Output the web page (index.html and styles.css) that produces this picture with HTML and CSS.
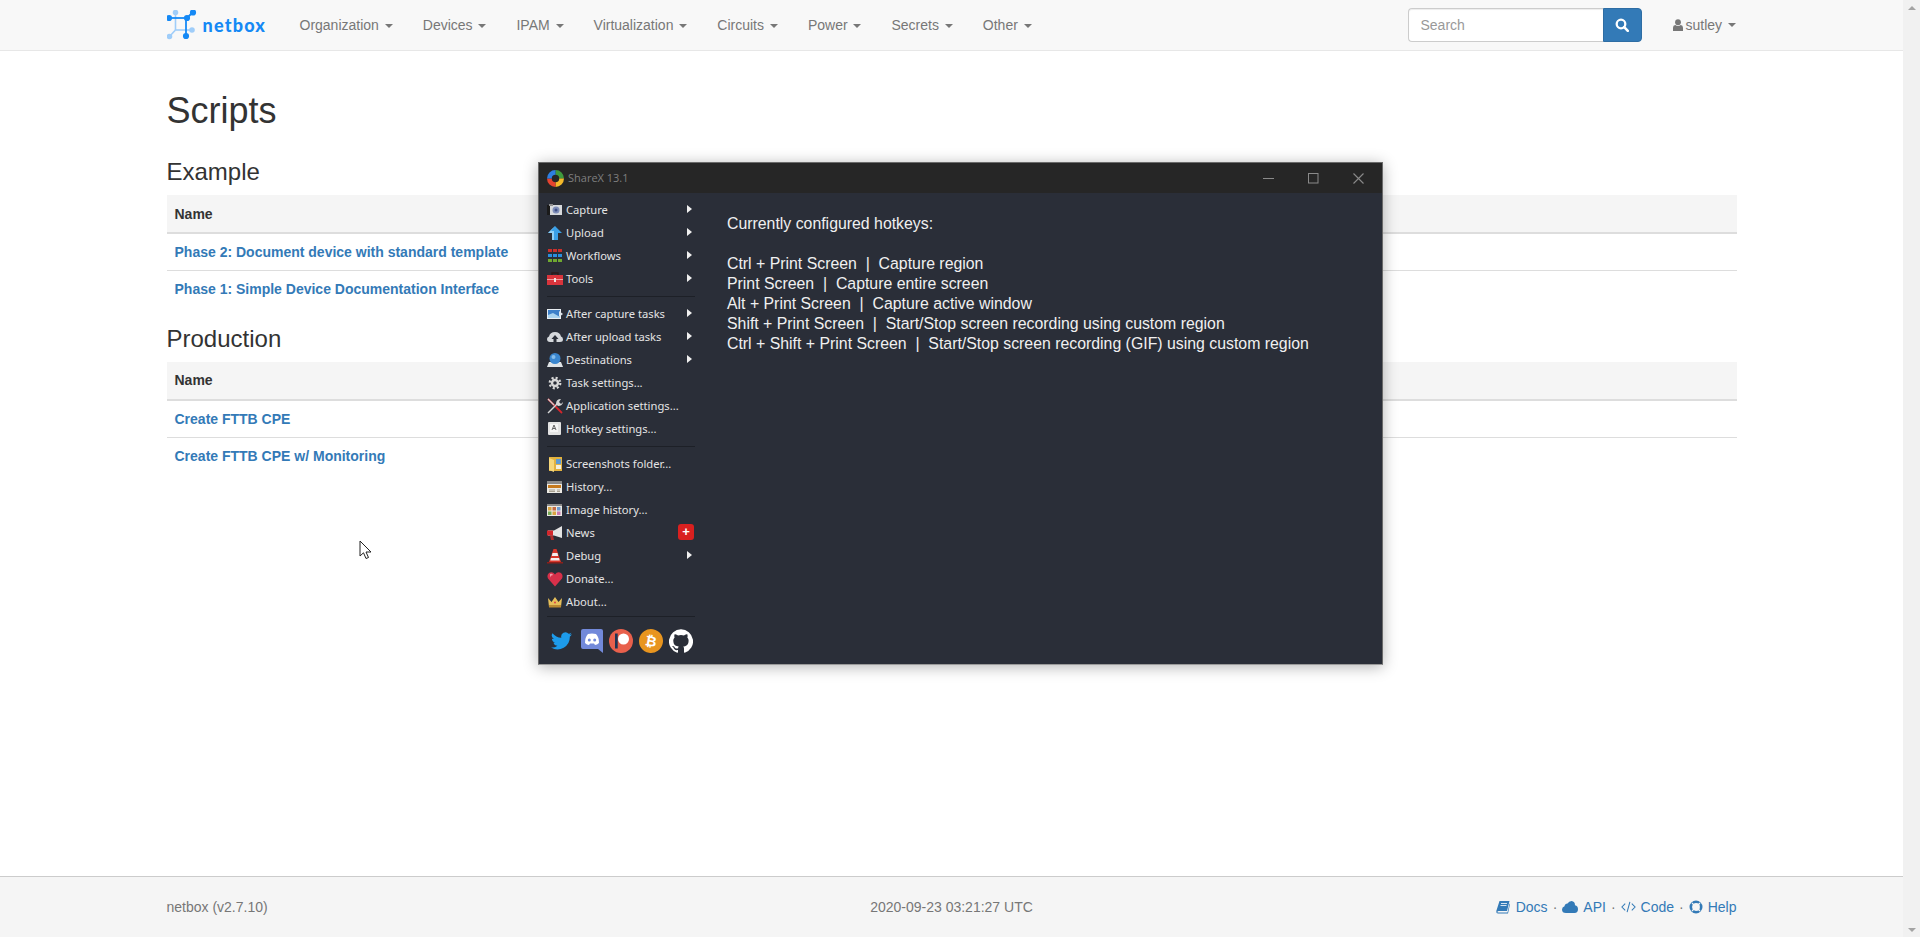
FILE: index.html
```html
<!DOCTYPE html>
<html lang="en">
<head>
<meta charset="utf-8">
<title>Scripts - NetBox</title>
<link rel="stylesheet" href="styles.css">
</head>
<body>
<div class="page">
  <nav class="navbar">
    <div class="nav-inner">
      <a class="brand">
        <svg class="brand-icon" viewBox="0 0 30 30" width="30" height="30">
          <g stroke="#9fcdf9" stroke-width="1.6" fill="#9fcdf9">
            <line x1="8.500" y1="2" x2="8.500" y2="20"/><line x1="8.500" y1="20" x2="25" y2="20"/><line x1="8.500" y1="20" x2="2" y2="27"/>
            <circle cx="8.500" cy="2.500" r="2"/><circle cx="25" cy="20" r="2"/><circle cx="2.500" cy="26.500" r="2"/>
          </g>
          <g stroke="#1589f5" stroke-width="1.8" fill="#1589f5">
            <line x1="1" y1="8" x2="20" y2="8"/><line x1="20" y1="8" x2="26" y2="2"/><line x1="19" y1="8" x2="19" y2="26"/>
            <circle cx="2" cy="8" r="2.200"/><circle cx="20" cy="8" r="2.200"/><circle cx="26" cy="2.500" r="2.200"/><circle cx="19" cy="26" r="2.200"/>
          </g>
        </svg>
        <span class="brand-text">netbox</span>
      </a>
      <ul class="menu">
        <li><a>Organization <span class="caret"></span></a></li>
        <li><a>Devices <span class="caret"></span></a></li>
        <li><a>IPAM <span class="caret"></span></a></li>
        <li><a>Virtualization <span class="caret"></span></a></li>
        <li><a>Circuits <span class="caret"></span></a></li>
        <li><a>Power <span class="caret"></span></a></li>
        <li><a>Secrets <span class="caret"></span></a></li>
        <li><a>Other <span class="caret"></span></a></li>
      </ul>
      <form class="search">
        <input class="search-input" type="text" placeholder="Search">
        <button class="search-btn" type="button" aria-label="Search">
          <svg viewBox="0 0 14 14" width="14" height="14"><circle cx="6" cy="6" r="4.300" fill="none" stroke="#fff" stroke-width="2.300"/><line x1="9.200" y1="9.200" x2="12.800" y2="12.800" stroke="#fff" stroke-width="2.600" stroke-linecap="round"/></svg>
        </button>
      </form>
      <a class="user">
        <svg viewBox="0 0 11 13" width="10" height="12"><circle cx="5.500" cy="3.500" r="3.200" fill="#777"/><path d="M0 13V9.500Q0 7 2.500 6.600Q5.500 8.500 8.500 6.600Q11 7 11 9.500V13Z" fill="#777"/></svg>
        sutley <span class="caret"></span>
      </a>
    </div>
  </nav>

  <main class="content">
    <h1 class="title">Scripts</h1>
    <h3 class="group">Example</h3>
    <table class="scripts">
      <thead><tr><th>Name</th></tr></thead>
      <tbody>
        <tr><td><a>Phase 2: Document device with standard template</a></td></tr>
        <tr><td><a>Phase 1: Simple Device Documentation Interface</a></td></tr>
      </tbody>
    </table>
    <h3 class="group">Production</h3>
    <table class="scripts">
      <thead><tr><th>Name</th></tr></thead>
      <tbody>
        <tr><td><a>Create FTTB CPE</a></td></tr>
        <tr><td><a>Create FTTB CPE w/ Monitoring</a></td></tr>
      </tbody>
    </table>
  </main>

  <footer class="footer">
    <div class="foot-inner">
      <span class="foot-cell">netbox (v2.7.10)</span>
      <span class="foot-cell foot-mid">2020-09-23 03:21:27 UTC</span>
      <span class="foot-cell foot-right">
        <svg class="fi fi-book" viewBox="0 0 14 14" width="14" height="14"><path d="M3.500 1H13.500L11 11H2.500Q1 11 1.500 12.500H11.500L13.500 3.500L14 4L12 13.500H2Q0 13.500 .3 11Z" fill="#337ab7"/><path d="M5 3.500H11M4.500 5.500H10.500" stroke="#fff" stroke-width=".8"/></svg>
        <a>Docs</a><span class="dot">·</span>
        <svg class="fi" viewBox="0 0 16 12" width="16" height="12"><path d="M4 12Q0 12 0 8.500Q0 6 2.500 5.300Q3 2.500 5.500 2.500Q7 0 9.500 0Q13 .5 13 4.300Q16 5 16 8.300Q16 12 12.500 12Z" fill="#337ab7"/></svg>
        <a>API</a><span class="dot">·</span>
        <svg class="fi" viewBox="0 0 16 12" width="15" height="12"><path d="M4.500 2.500L1 6L4.500 9.500M11.500 2.500L15 6L11.500 9.500M9.500 .5L6.500 11.500" fill="none" stroke="#337ab7" stroke-width="1.100"/></svg>
        <a>Code</a><span class="dot">·</span>
        <svg class="fi" viewBox="0 0 14 14" width="14" height="14"><circle cx="7" cy="7" r="5.200" fill="none" stroke="#337ab7" stroke-width="2.600"/><path d="M3 3L5 5M11 3L9 5M3 11L5 9M11 11L9 9" stroke="#f5f5f5" stroke-width="1.200"/></svg>
        <a>Help</a>
      </span>
    </div>
  </footer>

  <section class="win">
    <header class="win-title">
      <svg class="win-logo" viewBox="0 0 16 16" width="17" height="17">
        <path d="M8 0A8 8 0 0 1 16 8H11.500A3.500 3.500 0 0 0 8 4.500Z" fill="#3f9a3d"/>
        <path d="M16 8A8 8 0 0 1 8 16V11.500A3.500 3.500 0 0 0 11.500 8Z" fill="#f4b92a"/>
        <path d="M8 16A8 8 0 0 1 0 8H4.500A3.500 3.500 0 0 0 8 11.500Z" fill="#e5432f"/>
        <path d="M0 8A8 8 0 0 1 8 0V4.500A3.500 3.500 0 0 0 4.500 8Z" fill="#2e7fe0"/>
        <circle cx="8" cy="8" r="2.500" fill="#262626"/>
      </svg>
      <span class="win-name">ShareX 13.1</span>
      <span class="win-ctrls">
        <svg viewBox="0 0 11 11" width="11" height="11"><line x1="0" y1="5.500" x2="11" y2="5.500" stroke="#8a8a8a"/></svg>
        <svg viewBox="0 0 11 11" width="11" height="11"><rect x=".5" y=".5" width="9.500" height="9.500" fill="none" stroke="#8a8a8a"/></svg>
        <svg viewBox="0 0 11 11" width="11" height="11"><path d="M.5 .5L10.500 10.500M10.500 .5L.5 10.500" stroke="#8a8a8a" stroke-width="1.100"/></svg>
      </span>
    </header>
    <div class="win-body">
      <aside class="win-menu">
        <ul class="m-list">
          <li class="m-item"><svg class="m-ic" viewBox="0 0 16 16"><rect x="0" y="3" width="15" height="10" fill="#d7d9dc"/><rect x="0" y="3" width="3" height="10" fill="#1a1a1a"/><rect x="2" y="2" width="4" height="2" fill="#8c8c8c"/><circle cx="9" cy="8" r="3.500" fill="#7e8db8"/><circle cx="9" cy="8" r="1.500" fill="#3e4f86"/></svg><span class="m-text">Capture</span><i class="m-arrow"></i></li>
          <li class="m-item"><svg class="m-ic" viewBox="0 0 16 16"><path d="M8 1L15 8H11V15H5V8H1Z" fill="#3aa0e8"/><path d="M8 1L1 8H5V15H7V6H4Z" fill="#8fd0f7"/></svg><span class="m-text">Upload</span><i class="m-arrow"></i></li>
          <li class="m-item"><svg class="m-ic" viewBox="0 0 16 16"><path d="M1 1h4v3H1zM6 1h4v3H6zM11 1h4v3h-4z" fill="#c9302c"/><path d="M1 6h4v3H1zM6 6h4v3H6zM11 6h4v3h-4z" fill="#2a8fe0"/><path d="M1 11h4v3H1zM6 11h4v3H6zM11 11h4v3h-4z" fill="#6fa830"/></svg><span class="m-text">Workflows</span><i class="m-arrow"></i></li>
          <li class="m-item"><svg class="m-ic" viewBox="0 0 16 16"><path d="M5 4V2H11V4" fill="none" stroke="#2a1a1a" stroke-width="1.400"/><rect x="0" y="4" width="16" height="10" fill="#d8343c"/><rect x="0" y="8" width="16" height="1" fill="#f0a0a0"/><rect x="7" y="7" width="2" height="4" fill="#f0e0e0"/></svg><span class="m-text">Tools</span><i class="m-arrow"></i></li>
          <li class="m-sep"></li>
          <li class="m-item"><svg class="m-ic" viewBox="0 0 16 16"><rect x="0" y="3" width="14" height="10" fill="#e8edf2"/><rect x="1" y="4" width="12" height="8" fill="#3d7fc9"/><path d="M1 9L6 7L13 11V12H1Z" fill="#a9d2ef"/><path d="M12 5L16 8L12 11Z" fill="#dfe6ec"/></svg><span class="m-text">After capture tasks</span><i class="m-arrow"></i></li>
          <li class="m-item"><svg class="m-ic" viewBox="0 0 16 16"><path d="M3 13Q0 13 0 10Q0 8 2 7.500Q3 3 8 3Q13 3 14 7.500Q16 8 16 10.500Q16 13 13 13Z" fill="#d5d8dc"/><path d="M8 6L11.500 10H9.500V13H6.500V10H4.500Z" fill="#2a2e38"/></svg><span class="m-text">After upload tasks</span><i class="m-arrow"></i></li>
          <li class="m-item"><svg class="m-ic" viewBox="0 0 16 16"><path d="M2 10H14L16 15H0Z" fill="#dfe3e6"/><circle cx="8" cy="6.500" r="5.500" fill="#3a86cf"/><circle cx="6.500" cy="5" r="2" fill="#86bdea"/></svg><span class="m-text">Destinations</span><i class="m-arrow"></i></li>
          <li class="m-item"><svg class="m-ic" viewBox="0 0 16 16"><circle cx="8" cy="8" r="3" fill="none" stroke="#d8d8d8" stroke-width="2.400"/><circle cx="8" cy="8" r="5.300" fill="none" stroke="#d8d8d8" stroke-width="2.200" stroke-dasharray="2.100 2.060"/></svg><span class="m-text">Task settings...</span></li>
          <li class="m-item"><svg class="m-ic" viewBox="0 0 16 16"><path d="M1 1L15 15" stroke="#d4262c" stroke-width="1.800"/><path d="M1 1L7 7" stroke="#cfcfcf" stroke-width="1.200"/><path d="M1 15L10 6" stroke="#d5d5d5" stroke-width="1.500"/><path d="M9 6Q9 1 14 1L12 4L14 6L16 4Q15.500 8 11 8Z" fill="#d5d5d5"/></svg><span class="m-text">Application settings...</span></li>
          <li class="m-item"><svg class="m-ic" viewBox="0 0 16 16"><rect x="1" y="1" width="13" height="13" rx="1" fill="#e3e3e3"/><rect x="3" y="3" width="8" height="8" fill="#f5f5f5"/><path d="M5 9L7 4L9 9M6 7.500H8" fill="none" stroke="#555" stroke-width=".9"/></svg><span class="m-text">Hotkey settings...</span></li>
          <li class="m-sep"></li>
          <li class="m-item"><svg class="m-ic" viewBox="0 0 16 16"><rect x="2" y="1" width="13" height="14" fill="#e2b23f"/><path d="M2 2L7 4V16L2 14Z" fill="#f6d77a"/><rect x="9" y="3" width="5" height="5" fill="#5e9bd3"/><rect x="9" y="9" width="5" height="4" fill="#f4f0e0"/></svg><span class="m-text">Screenshots folder...</span></li>
          <li class="m-item"><svg class="m-ic" viewBox="0 0 16 16"><rect x="0" y="2" width="15" height="12" fill="#eceae4"/><rect x="0" y="2" width="15" height="3" fill="#8a8a8a"/><rect x="1" y="6" width="13" height="3" fill="#c67a1e"/><path d="M2 11H8M2 12.500H8M10 11H13M10 12.500H13" stroke="#a8a090"/></svg><span class="m-text">History...</span></li>
          <li class="m-item"><svg class="m-ic" viewBox="0 0 16 16"><rect x="0" y="2" width="15" height="12" fill="#eceae4"/><rect x="0" y="2" width="15" height="2" fill="#8a8a8a"/><rect x="1" y="5" width="3.500" height="3.500" fill="#d9a441"/><rect x="5.500" y="5" width="3.500" height="3.500" fill="#c56b43"/><rect x="10" y="5" width="3.500" height="3.500" fill="#6f9bcf"/><rect x="1" y="9.500" width="3.500" height="3.500" fill="#76a854"/><rect x="5.500" y="9.500" width="3.500" height="3.500" fill="#d9a441"/><rect x="10" y="9.500" width="3.500" height="3.500" fill="#c879b0"/></svg><span class="m-text">Image history...</span></li>
          <li class="m-item"><svg class="m-ic" viewBox="0 0 16 16"><path d="M15 1V13L7 10.500H1V5.500H7Z" fill="#e4e4e4"/><path d="M0 5.500H6V10.500H0Z" fill="#d4262c"/><path d="M3 10.500H6L7 15H4Z" fill="#b02a2a"/></svg><span class="m-text">News</span><span class="m-badge">+</span></li>
          <li class="m-item"><svg class="m-ic" viewBox="0 0 16 16"><path d="M6.500 1H9.500L14 14H2Z" fill="#d9362b"/><path d="M5.500 5H10.500L11.200 8H4.800ZM4 10H12L12.700 12.500H3.300Z" fill="#f3eded"/><rect x="0" y="14" width="16" height="1.500" fill="#8c1f1a"/></svg><span class="m-text">Debug</span><i class="m-arrow"></i></li>
          <li class="m-item"><svg class="m-ic" viewBox="0 0 16 16"><path d="M8 15.500L1 7.500Q-.5 4 2 2Q5.500 0 8 3.500Q10.500 0 14 2Q16.500 4 15 7.500Z" fill="#d8304a"/><path d="M3 3Q5 2 6 4Q3.500 4 3 6.500Z" fill="#f29aa6"/></svg><span class="m-text">Donate...</span></li>
          <li class="m-item"><svg class="m-ic" viewBox="0 0 16 16"><path d="M1 4L4.500 8L8 3L11.500 8L15 4L14 13H2Z" fill="#e5bf5b"/><rect x="2" y="11" width="12" height="2.500" fill="#b98a32"/><circle cx="8" cy="8.500" r="1" fill="#d44"/></svg><span class="m-text">About...</span></li>
          <li class="m-sep m-sep-last"></li>
        </ul>
        <div class="socials">
          <svg class="s-twitter" viewBox="0 0 24 20" width="21" height="18"><path d="M24 2.400a9.800 9.800 0 0 1-2.800.8A4.900 4.900 0 0 0 23.300.5a9.800 9.800 0 0 1-3.100 1.200 4.900 4.900 0 0 0-8.400 4.500A14 14 0 0 1 1.700 1a4.900 4.900 0 0 0 1.500 6.600 4.900 4.900 0 0 1-2.200-.6c0 2.400 1.700 4.400 4 4.900a4.900 4.900 0 0 1-2.200.1 4.900 4.900 0 0 0 4.600 3.400A9.900 9.900 0 0 1 0 17.400 14 14 0 0 0 21.500 5a9.900 9.900 0 0 0 2.500-2.600z" fill="#1d9bea"/></svg>
          <svg class="s-discord" viewBox="0 0 22 24" width="22" height="24"><path d="M2 0H20Q22 0 22 2V24L17 20H2Q0 20 0 18V2Q0 0 2 0Z" fill="#7289da"/><path d="M4 14Q4 8 7 5Q11 4 15 5Q18 8 18 14Q16 16 14 16L13 14.500H9L8 16Q6 16 4 14Z" fill="#fff"/><circle cx="8.300" cy="11" r="1.500" fill="#7289da"/><circle cx="13.700" cy="11" r="1.500" fill="#7289da"/></svg>
          <svg class="s-patreon" viewBox="0 0 24 24" width="24" height="24"><circle cx="12" cy="12" r="12" fill="#e8604c"/><circle cx="14.500" cy="10" r="5.500" fill="#fff"/><rect x="6" y="4.500" width="2.700" height="15" fill="#1f3555"/></svg>
          <span class="s-btc">₿</span>
          <svg class="s-github" viewBox="0 0 24 24" width="24" height="24"><path d="M12 .3a12 12 0 0 0-3.800 23.400c.6.1.8-.3.8-.6v-2c-3.300.7-4-1.600-4-1.600-.6-1.400-1.400-1.800-1.400-1.800-1-.7.1-.7.1-.7 1.200 0 1.900 1.200 1.900 1.200 1 1.800 2.800 1.300 3.500 1 0-.8.4-1.300.7-1.600-2.700-.3-5.500-1.300-5.500-6 0-1.200.5-2.300 1.300-3.100-.2-.4-.6-1.600 0-3.200 0 0 1-.3 3.400 1.200a11.500 11.500 0 0 1 6 0c2.300-1.500 3.300-1.200 3.300-1.200.6 1.600.2 2.800 0 3.200.9.8 1.300 1.900 1.300 3.200 0 4.600-2.800 5.600-5.500 5.900.5.4.9 1 .9 2.200v3.300c0 .3.1.7.8.6A12 12 0 0 0 12 .3" fill="#fff"/></svg>
        </div>
      </aside>
      <div class="win-main">
        <p>Currently configured hotkeys:</p>
        <p class="gap">Ctrl + Print Screen&nbsp; |&nbsp; Capture region</p>
        <p>Print Screen&nbsp; |&nbsp; Capture entire screen</p>
        <p>Alt + Print Screen&nbsp; |&nbsp; Capture active window</p>
        <p>Shift + Print Screen&nbsp; |&nbsp; Start/Stop screen recording using custom region</p>
        <p>Ctrl + Shift + Print Screen&nbsp; |&nbsp; Start/Stop screen recording (GIF) using custom region</p>
      </div>
    </div>
  </section>

  <svg class="cursor" viewBox="0 0 14 21" width="14" height="21"><path d="M1 1V16L4.500 12.800L7 18.500L9.500 17.500L7 12H12Z" fill="#fff" stroke="#222" stroke-width="1"/></svg>
</div>
<div class="scrollbar"><i class="sb-up"></i><i class="sb-down"></i></div>
</body>
</html>
```
FILE: styles.css
```css
* { box-sizing: border-box; }
html, body { height: 100%; }
body {
  margin: 0;
  display: flex;
  overflow: hidden;
  font-family: "Liberation Sans", Arial, sans-serif;
  font-size: 14px;
  line-height: 20px;
  color: #333;
  background: #fff;
}
.page { position: relative; flex: 1; min-width: 0; height: 100vh; display: flex; flex-direction: column; }
.scrollbar {
  width: 17px;
  background: #f1f1f1;
  display: flex;
  flex-direction: column;
  justify-content: space-between;
  align-items: center;
  padding: 6px 0 5px;
}
.sb-up { border: 4px solid transparent; border-top: 0; border-bottom: 4px solid #a3a3a3; }
.sb-down { border: 4px solid transparent; border-bottom: 0; border-top: 4px solid #a3a3a3; }

/* navbar */
.navbar { height: 51px; flex: none; background: #f8f8f8; border-bottom: 1px solid #e7e7e7; }
.nav-inner { width: 1600px; margin: 0 auto; padding: 0 15px; height: 50px; display: flex; align-items: center; color: #777; }
.brand { display: flex; align-items: center; width: 118px; flex: none; }
.brand-icon { display: block; }
.brand-text { margin-left: 6px; font-family: Lato, sans-serif; font-weight: 900; font-size: 18px; letter-spacing: 1.200px; color: #1589f5; }
.menu { display: flex; list-style: none; margin: 0; padding: 0; flex: 1; }
.menu a { display: block; padding: 15px; line-height: 20px; color: #777; }
.caret { display: inline-block; width: 0; height: 0; margin-left: 2px; vertical-align: middle; border-top: 4px solid #777; border-left: 4px solid transparent; border-right: 4px solid transparent; }
.search { display: flex; height: 34px; flex: none; }
.search-input { width: 195px; height: 34px; border: 1px solid #ccc; border-right: 0; border-radius: 4px 0 0 4px; padding: 6px 12px; font: 14px/20px "Liberation Sans", Arial, sans-serif; color: #555; background: #fff; box-shadow: inset 0 1px 1px rgba(0,0,0,.075); outline: 0; }
.search-input::placeholder { color: #999; opacity: 1; }
.search-btn { width: 39px; height: 34px; padding: 0; display: flex; align-items: center; justify-content: center; background: #337ab7; border: 1px solid #2e6da4; border-radius: 0 4px 4px 0; }
.user { display: flex; align-items: center; gap: 3px; margin-left: 31px; width: 64px; flex: none; color: #777; }
.user .caret { margin-left: 3px; }

/* content */
.content { width: 1600px; margin: 0 auto; padding: 40px 15px 0; flex: 1; }
.title { margin: 0 0 28px; font-size: 36px; font-weight: 500; line-height: 40px; color: #333; }
.group { margin: 0 0 10px; font-size: 24px; font-weight: 500; line-height: 26px; color: #333; }
.scripts { width: 100%; border-collapse: collapse; margin-bottom: 18px; font-size: 14px; }
.scripts th { height: 38px; padding: 8px; text-align: left; background: #f5f5f5; border-bottom: 2px solid #ddd; font-weight: 700; }
.scripts td { height: 37px; padding: 8px; border-bottom: 1px solid #ddd; font-weight: 700; color: #337ab7; }
.scripts tr:last-child td { border-bottom: 0; }

/* footer */
.footer { height: 61px; flex: none; background: #f5f5f5; border-top: 1px solid #ccc; }
.foot-inner { width: 1600px; height: 60px; margin: 0 auto; padding: 0 15px; display: flex; align-items: center; color: #777; }
.foot-cell { flex: 1; }
.foot-mid { text-align: center; }
.foot-right { display: flex; align-items: center; justify-content: flex-end; color: #337ab7; }
.fi { margin-right: 5px; flex: none; }
.fi-book { margin-right: 6px; }
.dot { margin: 0 5px; color: #777; }

/* floating ShareX window */
.win { position: absolute; left: 538px; top: 162px; width: 845px; height: 503px; display: flex; flex-direction: column; background: #2a2e38; border: 1px solid #6a6a6a; border-bottom-color: #9a9a9a; box-shadow: 0 2px 14px rgba(0,0,0,.3); color: #e6e6e6; }
.win-title { height: 30px; flex: none; display: flex; align-items: center; padding-left: 8px; background: #262626; }
.win-logo { display: block; flex: none; }
.win-name { margin-left: 4px; font-family: "Open Sans", sans-serif; font-size: 11px; color: #7f7f7f; }
.win-ctrls { margin-left: auto; margin-right: 18px; display: flex; gap: 34px; }
.win-body { flex: 1; display: flex; min-height: 0; }
.win-menu { width: 170px; flex: none; padding: 5px 0 0 8px; }
.m-list { list-style: none; margin: 0; padding: 0; width: 148px; }
.m-item { position: relative; height: 23px; display: flex; align-items: center; }
.m-ic { width: 16px; height: 16px; flex: none; display: block; }
.m-text { margin-left: 3px; font-family: "Noto Sans", sans-serif; font-size: 11.200px; color: #e4e4e4; white-space: nowrap; }
.m-arrow { position: absolute; left: 140px; top: 7px; border: 4px solid transparent; border-right: 0; border-left: 5px solid #f0f0f0; }
.m-badge { position: absolute; left: 131px; top: 3px; width: 16px; height: 16px; border-radius: 3px; background: #d9201f; color: #fff; font-size: 13px; font-weight: 700; line-height: 15px; text-align: center; }
.m-sep { height: 1px; margin: 6px 0 5px; background: #1d2027; }
.m-sep-last { margin: 3px 0 0; }
.socials { display: flex; align-items: center; height: 38px; margin-top: 5px; padding-left: 4px; gap: 6px; }
.socials svg { display: block; flex: none; }
.s-discord { margin-left: 3px; }
.s-btc { width: 24px; height: 24px; flex: none; border-radius: 50%; background: #e8951f; color: #fff; font-family: "DejaVu Sans", "Liberation Sans", sans-serif; font-weight: 700; font-size: 14px; line-height: 24px; text-align: center; transform: rotate(10deg); }
.win-main { flex: 1; padding: 21px 0 0 18px; font-size: 15.850px; line-height: 20px; color: #f0f0f0; }
.win-main p { margin: 0; white-space: nowrap; }
.win-main .gap { margin-top: 20px; }

.cursor { position: absolute; left: 359px; top: 540px; }
```
